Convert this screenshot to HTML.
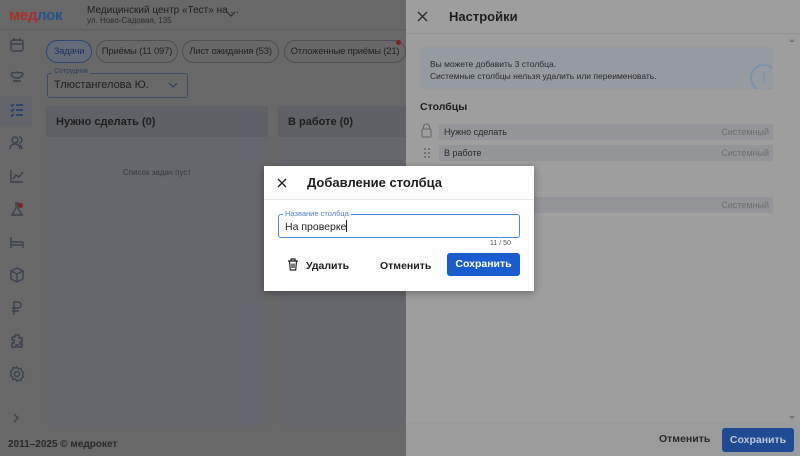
<!DOCTYPE html>
<html><head><meta charset="utf-8"><style>
*{box-sizing:border-box;margin:0;padding:0}
body{width:800px;height:456px;overflow:hidden;position:relative;font-family:"Liberation Sans","DejaVu Sans",sans-serif;background:#686868;color:#1e1e1e}
.abs{position:absolute;white-space:nowrap}
.ico{position:absolute;left:9px;width:16px;height:16px;fill:none;stroke:#3a4150;stroke-width:1.4}
.tab{position:absolute;top:40px;height:23px;border:1px solid #4c4f55;border-radius:12px;font-size:9.5px;color:#222;line-height:21px;text-align:center;white-space:nowrap;overflow:hidden;letter-spacing:-0.2px}
.col{position:absolute;top:106px;height:320px;background:#65676c}
.colh{height:31px;background:#5f6167;font-weight:bold;font-size:11px;padding:10px 0 0 10px;color:#1e1e1e;white-space:nowrap}
.row{position:absolute;height:16px;background:#939599;font-size:9px;color:#2a2a2a;line-height:16px;padding:0 4px 0 5px;white-space:nowrap}
.row span{float:right;color:#6c6e72}
</style></head><body>
<div class="abs" style="left:0;top:0;width:406px;height:30px;border-bottom:1px solid #5e5e5e"></div>
<div class="abs" style="left:9px;top:7px;font-size:15px;font-weight:bold;letter-spacing:-0.3px"><span style="color:#a8302a">мед</span><span style="color:#24538f">лок</span></div>
<div class="abs" style="left:87px;top:5px;font-size:10px;color:#1e1e1e">Медицинский центр «Тест» на ...</div>
<div class="abs" style="left:87px;top:16px;font-size:8px;color:#2e2e2e">ул. Ново-Садовая, 135</div>
<svg class="abs" style="left:226px;top:10px" width="10" height="8"><path d="M1 2l4 4 4-4" fill="none" stroke="#2e2e2e" stroke-width="1.2"/></svg>
<div class="abs" style="left:0;top:96px;width:32px;height:30px;background:#62646a"></div>
<svg class="ico" style="top:37px" viewBox="0 0 16 16"><rect x="2" y="3" width="12" height="11" rx="2"/><path d="M2 7h12M5 1v3M11 1v3"/></svg>
<svg class="ico" style="top:69px" viewBox="0 0 16 16"><path d="M2 5c2-3 4 0 6-2 2 2 4-1 6 2-1 3-3 4-6 4S3 8 2 5zM4 12h8"/></svg>
<svg class="ico" style="top:102px;stroke:#1f3d6a" viewBox="0 0 16 16"><path d="M2 3l1 1 2-2M2 8l1 1 2-2M2 13l1 1 2-2M7 3h7M7 8h7M7 13h7"/></svg>
<svg class="ico" style="top:135px" viewBox="0 0 16 16"><circle cx="6" cy="5" r="3"/><path d="M1 14c0-3 2-5 5-5s5 2 5 5M10 2a3 3 0 010 6M13 14c0-2-1-3-2-4"/></svg>
<svg class="ico" style="top:168px" viewBox="0 0 16 16"><path d="M2 2v12h12M4 11l3-4 3 2 4-5"/></svg>
<svg class="ico" style="top:201px" viewBox="0 0 16 16"><path d="M6 2h4M7 2v5l-4 7h10l-4-7V2"/></svg>
<div class="abs" style="left:18px;top:203px;width:5px;height:5px;border-radius:50%;background:#7a2420"></div>
<svg class="ico" style="top:234px" viewBox="0 0 16 16"><path d="M2 3v11M14 8v6M2 8h12M2 11h12"/></svg>
<svg class="ico" style="top:267px" viewBox="0 0 16 16"><path d="M8 1l6 3v8l-6 3-6-3V4zM2 4l6 3 6-3M8 7v8"/></svg>
<svg class="ico" style="top:300px" viewBox="0 0 16 16"><path d="M5 15V2h4a3 3 0 010 6H3M3 11h7"/></svg>
<svg class="ico" style="top:333px" viewBox="0 0 16 16"><path d="M6 2h4v3h3v4h-2v2h2v3H9v-2H7v2H3v-4h2V7H3V4h3z"/></svg>
<svg class="ico" style="top:366px" viewBox="0 0 16 16"><circle cx="8" cy="8" r="2.5"/><path d="M8 1l1.5 2 2.5-.5.5 2.5 2 1.5-1 2 1 2-2 1.5-.5 2.5-2.5-.5L8 15l-1.5-2-2.5.5-.5-2.5-2-1.5 1-2-1-2 2-1.5.5-2.5 2.5.5z"/></svg>
<svg class="abs" style="left:12px;top:413px" width="8" height="10"><path d="M2 1l4 4-4 4" fill="none" stroke="#3a4150" stroke-width="1.3"/></svg>
<div class="abs" style="left:8px;top:439px;font-size:10px;font-weight:bold;color:#2a2a2a">2011–2025 © медрокет</div>
<div class="tab" style="left:46px;width:46px;border-color:#2e4670;background:#646b78;color:#1f3560">Задачи</div>
<div class="tab" style="left:96px;width:82px">Приёмы (11 097)</div>
<div class="tab" style="left:182px;width:97px">Лист ожидания (53)</div>
<div class="tab" style="left:284px;width:122px">Отложенные приёмы (21)</div>
<div class="abs" style="left:396px;top:40px;width:5px;height:5px;border-radius:50%;background:#7a2420"></div>
<div class="abs" style="left:47px;top:73px;width:141px;height:25px;border:1px solid #3c4c68;border-radius:3px"></div>
<div class="abs" style="left:52px;top:68px;font-size:7px;color:#2e3e5c;background:#686868;padding:0 2px">Сотрудник</div>
<div class="abs" style="left:54px;top:79px;font-size:11px;color:#1e1e1e">Тлюстангелова Ю.</div>
<svg class="abs" style="left:168px;top:82px" width="10" height="7"><path d="M1 1l4 4 4-4" fill="none" stroke="#2e3e5c" stroke-width="1.2"/></svg>
<div class="col" style="left:46px;width:222px"><div class="colh">Нужно сделать (0)</div><div style="text-align:center;font-size:8px;color:#3a3a3a;margin-top:31px">Список задач пуст</div></div>
<div class="col" style="left:278px;width:128px"><div class="colh">В работе (0)</div></div>
<div class="abs" style="left:406px;top:0;width:394px;height:456px;background:#9e9e9e"></div>
<div class="abs" style="left:406px;top:33px;width:394px;height:1px;background:#929292"></div>
<div class="abs" style="left:406px;top:422px;width:394px;height:34px;background:#9b9b9b"></div>
<svg class="abs" style="left:417px;top:11px" width="11" height="11"><path d="M1 1l9 9M10 1l-9 9" stroke="#2a2a2a" stroke-width="1.3"/></svg>
<div class="abs" style="left:449px;top:9px;font-size:13px;font-weight:bold;color:#1e1e1e">Настройки</div>
<div class="abs" style="left:420px;top:47px;width:353px;height:42px;background:#969aa1"></div>
<div class="abs" style="left:430px;top:58px;font-size:8.5px;color:#2a2a2a;line-height:12px">Вы можете добавить 3 столбца.<br>Системные столбцы нельзя удалить или переименовать.</div>
<div class="abs" style="left:750px;top:64px;width:22px;height:25px;overflow:hidden"><div style="width:28px;height:28px;border:2px solid #7d93ac;border-radius:50%;color:#7d93ac;font-size:16px;text-align:center;line-height:24px;font-family:'Liberation Serif',serif">i</div></div>
<div class="abs" style="left:420px;top:101px;font-size:10.5px;font-weight:bold;color:#1e1e1e">Столбцы</div>
<svg class="abs" style="left:421px;top:123px" width="11" height="15"><path d="M2.5 6V4a3 3 0 016 0v2" fill="none" stroke="#666" stroke-width="1"/><rect x="1" y="6" width="9" height="8" rx="1" fill="none" stroke="#666"/></svg>
<div class="row" style="left:439px;width:334px;top:124px">Нужно сделать<span>Системный</span></div>
<svg class="abs" style="left:423px;top:147px" width="8" height="12" fill="#666"><circle cx="2" cy="2" r="1"/><circle cx="6" cy="2" r="1"/><circle cx="2" cy="6" r="1"/><circle cx="6" cy="6" r="1"/><circle cx="2" cy="10" r="1"/><circle cx="6" cy="10" r="1"/></svg>
<div class="row" style="left:439px;width:334px;top:145px">В работе<span>Системный</span></div>
<div class="row" style="left:439px;width:334px;top:197px"><span>Системный</span></div>
<svg class="abs" style="left:789px;top:38px" width="6" height="4"><path d="M0 4l3-3 3 3z" fill="#777"/></svg>
<svg class="abs" style="left:789px;top:416px" width="6" height="4"><path d="M0 0l3 3 3-3z" fill="#777"/></svg>
<div class="abs" style="left:659px;top:433px;font-size:10.5px;font-weight:bold;color:#2a2a2a">Отменить</div>
<div class="abs" style="left:722px;top:428px;width:72px;height:24px;background:#1f4a94;border-radius:3px;color:#bcc6d6;font-size:10.5px;font-weight:bold;text-align:center;line-height:24px">Сохранить</div>
<div class="abs" style="left:264px;top:166px;width:270px;height:125px;background:#fff;box-shadow:0 2px 8px rgba(0,0,0,.3)">
  <svg class="abs" style="left:13px;top:12px" width="10" height="10"><path d="M1 1l8 8M9 1l-8 8" stroke="#222" stroke-width="1.3"/></svg>
  <div class="abs" style="left:43px;top:9px;font-size:13px;font-weight:bold;color:#1e1e1e">Добавление столбца</div>
  <div class="abs" style="left:0;top:33px;width:270px;height:1px;background:#e6e6e6"></div>
  <div class="abs" style="left:14px;top:48px;width:242px;height:24px;border:1px solid #4f86e0;border-radius:3px"></div>
  <div class="abs" style="left:19px;top:43px;font-size:7.5px;color:#4f7fd0;background:#fff;padding:0 2px">Название столбца</div>
  <div class="abs" style="left:21px;top:54px;font-size:10.5px;color:#1e1e1e">На проверке<span style="display:inline-block;width:1px;height:12px;background:#222;vertical-align:-2px"></span></div>
  <div class="abs" style="left:226px;top:74px;font-size:7px;color:#555">11 / 50</div>
  <svg class="abs" style="left:23px;top:92px" width="12" height="13"><path d="M1 3h10M4 3V1h4v2M2.5 3l.8 9h5.4l.8-9M5 5.5v4.5M7 5.5v4.5" fill="none" stroke="#222" stroke-width="1.2"/></svg>
  <div class="abs" style="left:42px;top:94px;font-size:10.5px;font-weight:bold;color:#1e1e1e">Удалить</div>
  <div class="abs" style="left:116px;top:94px;font-size:10.5px;font-weight:bold;color:#1e1e1e">Отменить</div>
  <div class="abs" style="left:183px;top:87px;width:73px;height:23px;background:#1a5bd0;border-radius:3px;color:#fff;font-size:10.5px;font-weight:bold;text-align:center;line-height:23px">Сохранить</div>
</div>
</body></html>
